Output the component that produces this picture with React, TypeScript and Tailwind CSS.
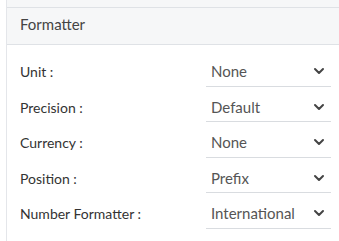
import { ChevronDown } from 'lucide-react';

const rows = [
  { label: 'Unit :', value: 'None' },
  { label: 'Precision :', value: 'Default' },
  { label: 'Currency :', value: 'None' },
  { label: 'Position :', value: 'Prefix' },
  { label: 'Number Formatter :', value: 'International' },
];

export default function App() {
  return (
    <div className="w-[339px] h-[241px] bg-white overflow-hidden" style={{ fontFamily: 'Lato, "Open Sans", sans-serif' }}>
      <div className="ml-[6px] h-full border-l border-[#e4e6ea] flex flex-col">
        {/* previous section edge */}
        <div className="h-[8px] bg-[#f6f7f8] border-b border-[#dfe2e6]" />

        {/* Header */}
        <div className="h-[37px] bg-[#f6f7f8] border-b border-[#dfe2e6] flex items-center pl-[13px] pb-[3px] text-[15px] text-[#444]">
          Formatter
        </div>

        {/* Rows */}
        <div className="flex flex-col pt-[9px]">
          {rows.map((r) => (
            <div key={r.label} className="h-[35.5px] flex items-center">
              <div className="w-[199px] pl-[13px] text-[14px] text-[#333]">{r.label}</div>
              <div className="w-[125px] h-[30px] flex items-center justify-between border-b border-[#d9dce0] pl-[5px] pr-[4px] text-[15px] text-[#555]">
                <span>{r.value}</span>
                <ChevronDown className="w-[16px] h-[16px] text-[#444]" strokeWidth={3} />
              </div>
            </div>
          ))}
        </div>
      </div>
    </div>
  );
}
